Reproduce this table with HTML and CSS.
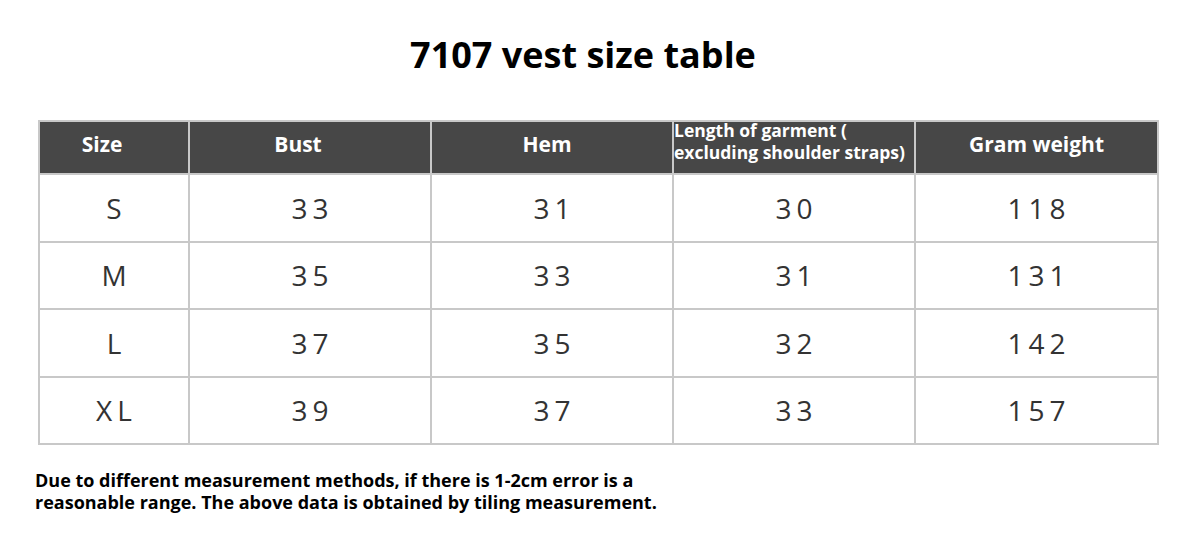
FILE: index.html
```html
<!DOCTYPE html>
<html>
<head>
<meta charset="utf-8">
<link rel="stylesheet" href="styles.css">
</head>
<body>
<div class="page">
  <h1 class="title">7107 vest size table</h1>
  <table class="sizes">
    <colgroup>
      <col class="c1"><col class="c2"><col class="c3"><col class="c4"><col class="c5">
    </colgroup>
    <thead>
      <tr>
        <th class="shift-l">Size</th>
        <th class="shift-l">Bust</th>
        <th class="shift-s">Hem</th>
        <th class="small"><span class="lift">Length of garment (<br>excluding shoulder straps)</span></th>
        <th>Gram weight</th>
      </tr>
    </thead>
    <tbody>
      <tr><td>S</td><td>33</td><td>31</td><td>30</td><td>118</td></tr>
      <tr><td>M</td><td>35</td><td>33</td><td>31</td><td>131</td></tr>
      <tr><td>L</td><td>37</td><td>35</td><td>32</td><td>142</td></tr>
      <tr><td>XL</td><td>39</td><td>37</td><td>33</td><td>157</td></tr>
    </tbody>
  </table>
  <p class="note">Due to different measurement methods, if there is 1-2cm error is a<br>reasonable range. The above data is obtained by tiling measurement.</p>
</div>
</body>
</html>
```

FILE: styles.css
```css
html, body {
  margin: 0;
  padding: 0;
  background: #ffffff;
}
.page {
  width: 1200px;
  height: 549px;
  font-family: "Open Sans", "Liberation Sans", sans-serif;
  color: #333;
  padding-top: 33px;
  box-sizing: border-box;
}
.title {
  margin: 0;
  font-size: 36px;
  font-weight: 700;
  color: #000;
  text-align: center;
  padding-right: 34px;
  line-height: 44px;
  height: 44px;
}
.sizes {
  margin: 43px 0 0 38px;
  width: 1119px;
  border-collapse: collapse;
  table-layout: fixed;
  border: 2px solid #c8c8c8;
}
.c1 { width: 150px; }
.c2 { width: 242px; }
.c3 { width: 242px; }
.c4 { width: 242px; }
.c5 { width: 243px; }
.sizes th {
  background: #474747;
  color: #fff;
  font-size: 21px;
  font-weight: 700;
  height: 44px;
  padding: 0 0 7px 0;
  border: 2px solid #c8c8c8;
  line-height: 24px;
}
.sizes th.shift-l {
  padding-right: 24px;
}
.sizes th.shift-s {
  padding-right: 10px;
}
.sizes th.small {
  font-size: 17.5px;
  line-height: 21.5px;
  text-align: left;
  vertical-align: top;
  padding: 0;
  height: 51px;
}
.lift {
  display: block;
  margin-top: -2px;
}
.sizes td {
  border: 2px solid #c8c8c8;
  text-align: center;
  font-size: 28px;
  letter-spacing: 5px;
  padding: 0 0 0 5px;
  height: 65.5px;
  color: #333;
}
.note {
  margin: 24px 0 0 35px;
  font-size: 18px;
  font-weight: 700;
  color: #000;
  line-height: 22px;
}
```
